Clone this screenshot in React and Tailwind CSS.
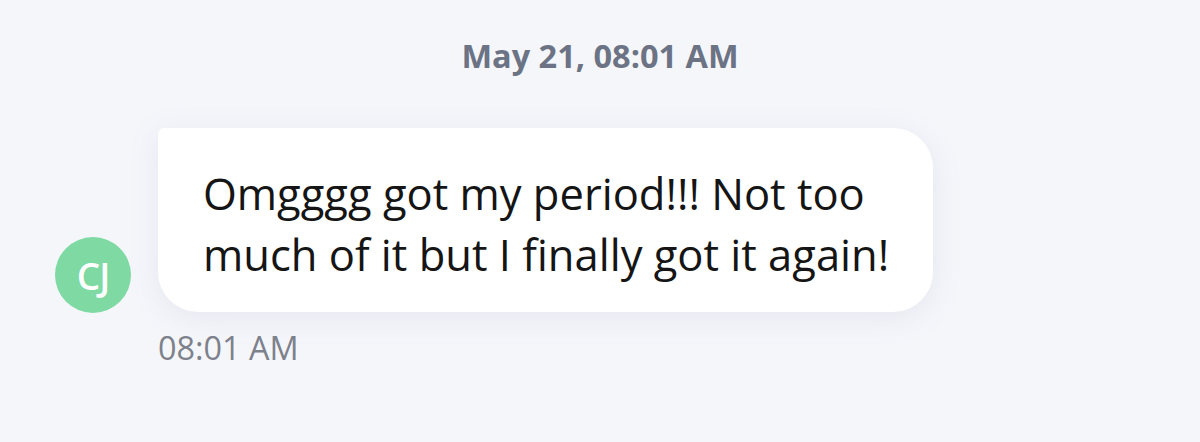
export default function App() {
  return (
    <div className="w-[1200px] h-[442px] bg-[#f5f6fa] overflow-hidden" style={{ fontFamily: '"Open Sans", sans-serif' }}>
      <div className="pt-[34px] flex justify-center">
        <div className="text-[32.5px] leading-[44px] font-bold text-[#6b7385]">May 21, 08:01 AM</div>
      </div>
      <div className="mt-[50px] pl-[55px] flex items-end gap-[27px]">
        <div className="w-[76px] h-[76px] rounded-full bg-[#7ed9a3] flex items-center justify-center text-white text-[37px] leading-none font-semibold mb-[-1px] tracking-[-1px]">CJ</div>
        <div className="w-[775px] bg-white rounded-[40px] rounded-tl-[6px] pl-[45px] pr-[30px] pt-[35px] pb-[27px] shadow-[0_6px_30px_rgba(120,130,170,0.12)]">
          <div className="text-[43.5px] leading-[61px] text-[#151515]">
            Omgggg got my period!!! Not too much of it but I finally got it again!
          </div>
        </div>
      </div>
      <div className="pl-[158px] mt-[13px] text-[32.4px] leading-[44px] text-[#7d818c]">08:01 AM</div>
    </div>
  );
}
